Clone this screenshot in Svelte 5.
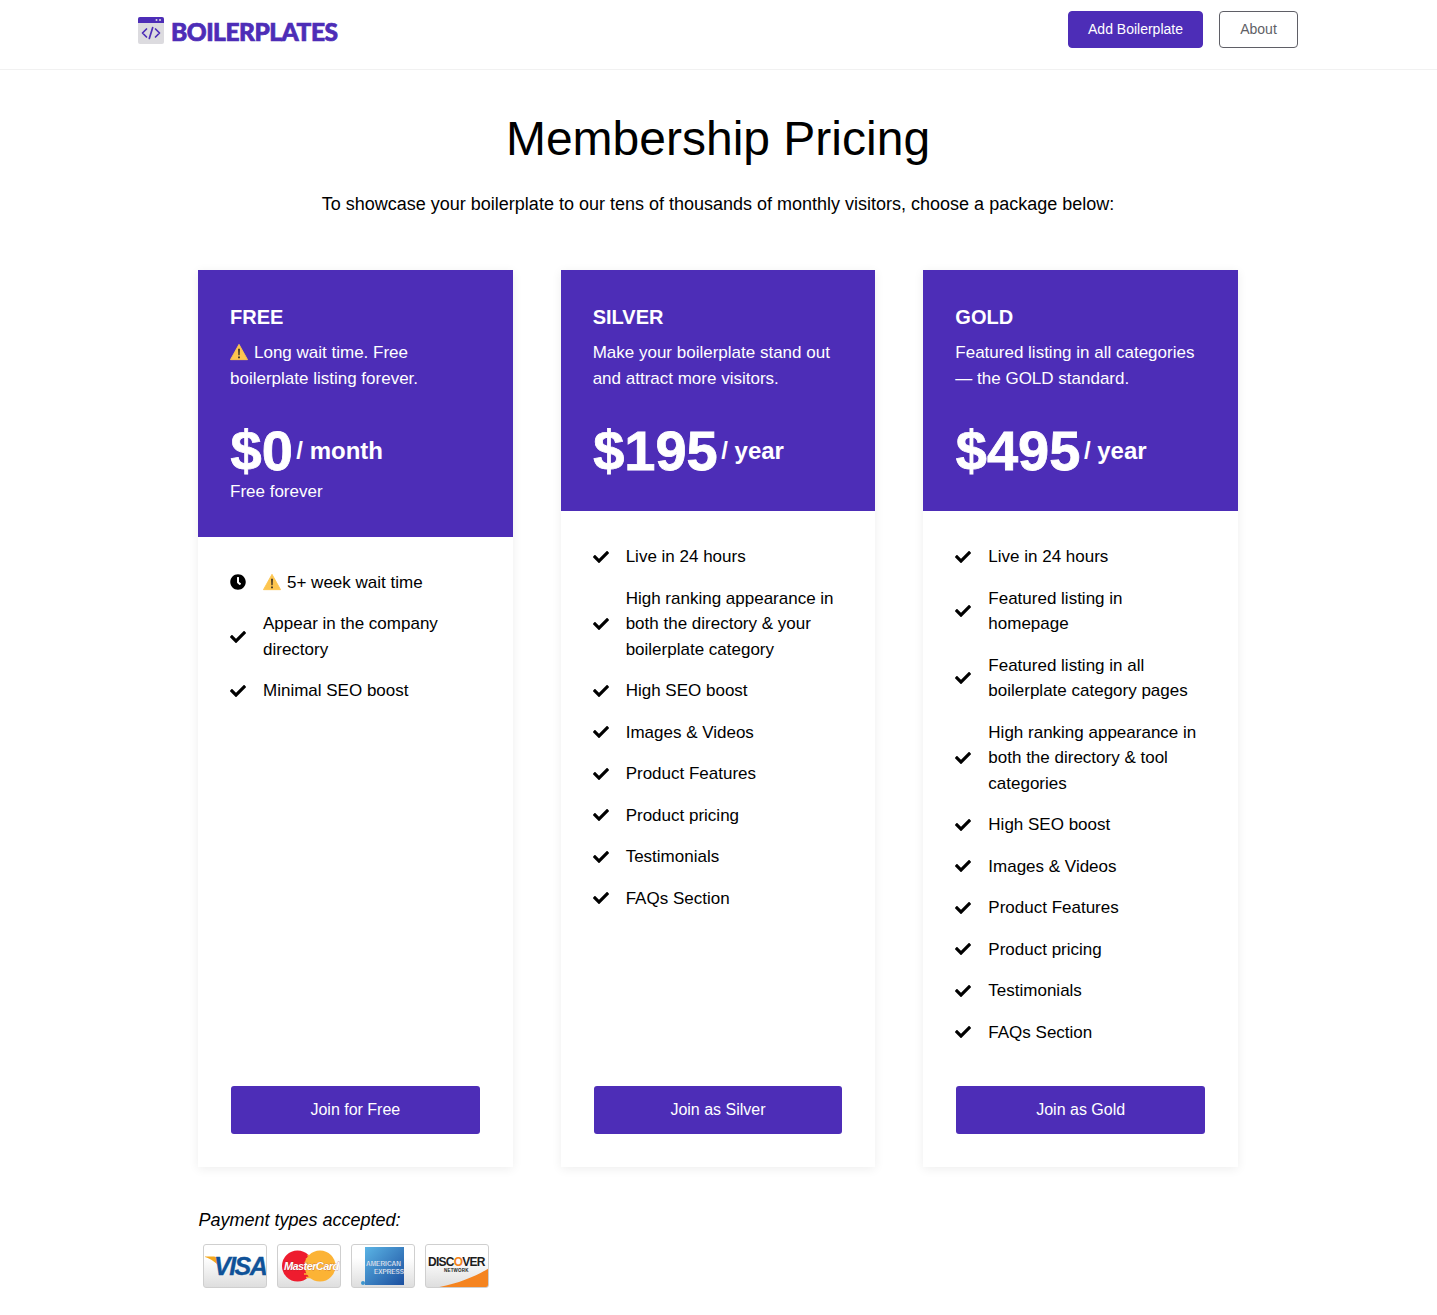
<script>
  const purple = '#4d2db7';
  const plans = [
    {
      name: 'FREE', warn: true, desc: 'Long wait time. Free boilerplate listing forever.', price: '$0', per: '/ month', note: 'Free forever', cta: 'Join for Free',
      items: [
        { text: '5+ week wait time', clock: true },
        { text: 'Appear in the company directory' },
        { text: 'Minimal SEO boost' }
      ]
    },
    {
      name: 'SILVER', desc: 'Make your boilerplate stand out and attract more visitors.', price: '$195', per: '/ year', cta: 'Join as Silver',
      items: ['Live in 24 hours', 'High ranking appearance in both the directory & your boilerplate category', 'High SEO boost', 'Images & Videos', 'Product Features', 'Product pricing', 'Testimonials', 'FAQs Section'].map((text) => ({ text }))
    },
    {
      name: 'GOLD', desc: 'Featured listing in all categories — the GOLD standard.', price: '$495', per: '/ year', cta: 'Join as Gold',
      items: ['Live in 24 hours', 'Featured listing in homepage', 'Featured listing in all boilerplate category pages', 'High ranking appearance in both the directory & tool categories', 'High SEO boost', 'Images & Videos', 'Product Features', 'Product pricing', 'Testimonials', 'FAQs Section'].map((text) => ({ text }))
    }
  ];
</script>

{#snippet warning(size)}
  <svg class="warn" width={size} height={size} viewBox="0 0 20 20" aria-hidden="true">
    <path d="M10 1.500 19.500 18.500H.5Z" fill="#fdc54f" stroke="#fdc54f" stroke-width="1" stroke-linejoin="round" />
    <path d="M9 6.500h2l-.3 7h-1.400ZM9 15h2v2H9Z" fill="#3a3024" />
  </svg>
{/snippet}

<header class="topbar">
  <div class="topbar-inner">
    <a class="logo" href="#top">
      <svg width="26" height="27" viewBox="0 0 26 27" aria-hidden="true">
        <rect y="0" width="26" height="27" rx="2" fill="#dcdbdf" />
        <path d="M0 6V2a2 2 0 0 1 2-2h22a2 2 0 0 1 2 2v4Z" fill={purple} />
        <circle cx="18.500" cy="3" r="1" fill="#dcdbdf" /><circle cx="22" cy="3" r="1" fill="#dcdbdf" />
        <path d="M8.500 12 4.500 16l4 4M17.500 12l4 4-4 4M14.700 10.500l-3.400 11" fill="none" stroke={purple} stroke-width="1.700" stroke-linecap="round" stroke-linejoin="round" />
      </svg>
      <span class="wordmark">BOILERPLATES</span>
    </a>
    <nav class="nav">
      <a class="btn-add" href="#top">Add Boilerplate</a>
      <a class="btn-about" href="#top">About</a>
    </nav>
  </div>
</header>

<main class="page">
  <h1>Membership Pricing</h1>
  <p class="lead">To showcase your boilerplate to our tens of thousands of monthly visitors, choose a package below:</p>

  <section class="plans">
    {#each plans as plan}
      <article class="plan">
        <div class="plan-head">
          <h2>{plan.name}</h2>
          <p class="desc">{#if plan.warn}{@render warning(18)}{/if}{plan.desc}</p>
          <div class="price"><strong>{plan.price}</strong><span>{plan.per}</span></div>
          {#if plan.note}<p class="note">{plan.note}</p>{/if}
        </div>
        <ul class="features">
          {#each plan.items as item}
            <li>
              {#if item.clock}
                <svg class="ico" width="16" height="16" viewBox="0 0 512 512" aria-hidden="true">
                  <path d="M256,8C119,8,8,119,8,256S119,504,256,504,504,393,504,256,393,8,256,8Zm92.490,313h0l-20,25a16,16,0,0,1-22.490,2.500h0l-67-49.720a40,40,0,0,1-15-31.230V112a16,16,0,0,1,16-16h32a16,16,0,0,1,16,16V256l58,42.500A16,16,0,0,1,348.490,321Z" fill="#000" />
                </svg>
              {:else}
                <svg class="ico" width="16" height="16" viewBox="0 0 512 512" aria-hidden="true">
                  <path d="M173.898 439.404l-166.400-166.400c-9.997-9.997-9.997-26.206 0-36.204l36.203-36.204c9.997-9.998 26.207-9.998 36.204 0L192 312.690 432.095 72.596c9.997-9.997 26.207-9.997 36.204 0l36.203 36.204c9.997 9.997 9.997 26.206 0 36.204l-294.400 294.401c-9.998 9.997-26.207 9.997-36.204-.001z" fill="#000" />
                </svg>
              {/if}
              <span class="feat-text">{#if item.clock}{@render warning(18)}{/if}{item.text}</span>
            </li>
          {/each}
        </ul>
        <div class="plan-foot"><a class="join" href="#top">{plan.cta}</a></div>
      </article>
    {/each}
  </section>

  <section class="payments">
    <p class="pay-label">Payment types accepted:</p>
    <div class="cards">
      <div class="paycard">
        <svg width="64" height="44" viewBox="0 0 64 44" aria-hidden="true">
          <path d="M2 12.500h9c1.500 0 2.500.8 3 2.500l2 8C13 18 8 15 2 13Z" fill="#f4a81d" />
          <text x="11" y="31" class="visa">VISA</text>
        </svg>
      </div>
      <div class="paycard">
        <svg width="64" height="44" viewBox="0 0 64 44" aria-hidden="true">
          <circle cx="20.500" cy="22" r="15.500" fill="#ee1c2e" />
          <circle cx="43" cy="22" r="15.500" fill="#fcb335" />
          <path d="M31.800 11.500h-1.400M28.800 15h5.600M27.500 18.500h8M27 30h7.500M29 33.500h5" stroke="#fcb335" stroke-width="1.400" fill="none" />
          <text x="7" y="26" class="mc">MasterCard</text>
        </svg>
      </div>
      <div class="paycard">
        <svg width="64" height="44" viewBox="0 0 64 44" aria-hidden="true">
          <defs><linearGradient id="ax" x1="0" y1="0" x2="1" y2="1"><stop offset="0" stop-color="#5bb4e5" /><stop offset="1" stop-color="#1c4f9f" /></linearGradient></defs>
          <rect x="14" y="3" width="39" height="38" fill="url(#ax)" />
          <circle cx="12" cy="39" r="2" fill="#3d95ce" />
          <text x="15" y="22" textLength="35" lengthAdjust="spacingAndGlyphs" class="ax">AMERICAN</text>
          <text x="23" y="29.500" textLength="30" lengthAdjust="spacingAndGlyphs" class="ax">EXPRESS</text>
        </svg>
      </div>
      <div class="paycard">
        <svg width="64" height="44" viewBox="0 0 64 44" aria-hidden="true">
          <path d="M9 44C32 40 50 33 64 24v20Z" fill="#f58420" />
          <text x="3" y="21.500" class="disc">DISC<tspan fill="#f58420">O</tspan>VER</text>
          <text x="19" y="28" class="net">NETWORK</text>
        </svg>
      </div>
    </div>
  </section>
</main>

<style>
  :global(body) {
    margin: 0;
    background: #fff;
    color: #000;
    font-family: "Liberation Sans", Arial, sans-serif;
  }

  a { text-decoration: none; }

  .topbar {
    height: 69px;
    border-bottom: 1px solid #f1f1f1;
  }
  .topbar-inner {
    width: 1160px;
    height: 100%;
    margin-left: 138px;
    display: flex;
    align-items: flex-start;
    justify-content: space-between;
  }
  .logo {
    display: flex;
    align-items: center;
    gap: 7px;
    margin-top: 17px;
    height: 27px;
    color: #4d2db7;
  }
  .wordmark {
    font-family: Lato, "Open Sans", sans-serif;
    font-weight: 900;
    font-size: 24.500px;
    letter-spacing: -0.48px;
    line-height: 27px;
    -webkit-text-stroke: 0.7px #4d2db7;
    margin-top: 2px;
  }
  .nav {
    display: flex;
    gap: 16px;
    margin-top: 11px;
  }
  .btn-add, .btn-about {
    box-sizing: border-box;
    height: 37px;
    line-height: 35px;
    border-radius: 4px;
    font-size: 14px;
    text-align: center;
  }
  .btn-add {
    width: 135px;
    background: #4d2db7;
    border: 1px solid #4d2db7;
    color: #fff;
  }
  .btn-about {
    width: 79px;
    border: 1px solid #5f5f66;
    color: #5f5f66;
  }

  .page {
    width: 1040px;
    margin-left: 198px;
  }
  h1 {
    margin: 0;
    padding-top: 40px;
    font-weight: 400;
    font-size: 48px;
    line-height: 58px;
    text-align: center;
  }
  .lead {
    margin: 23px 0 0;
    font-size: 18px;
    line-height: 27px;
    text-align: center;
  }

  .plans {
    display: grid;
    grid-template-columns: repeat(3, 1fr);
    gap: 48px;
    margin-top: 52px;
    height: 897px;
  }
  .plan {
    display: flex;
    flex-direction: column;
    background: #fff;
    box-shadow: 0 2px 10px rgba(0, 0, 0, 0.07);
  }
  .plan-head {
    box-sizing: border-box;
    background: #4d2db7;
    color: #fff;
    padding: 32px;
  }
  h2 {
    margin: 0;
    font-size: 20px;
    line-height: 30px;
    font-weight: 700;
  }
  .desc {
    margin: 8px 0 0;
    font-size: 17px;
    line-height: 25.500px;
  }
  .warn {
    vertical-align: -3px;
    margin-right: 6px;
  }
  .price {
    display: flex;
    align-items: center;
    gap: 4px;
    margin-top: 32px;
    height: 56px;
    line-height: 56px;
  }
  .price strong {
    font-size: 56px;
    font-weight: 700;
    margin-left: 0.5px;
    -webkit-text-stroke: 0.8px #fff;
  }
  .price span {
    font-size: 24px;
    font-weight: 700;
    margin-left: -0.5px;
  }
  .note {
    margin: 0;
    font-size: 17px;
    line-height: 25.500px;
  }

  .features {
    list-style: none;
    margin: 0;
    padding: 33px 32px 0;
    display: flex;
    flex-direction: column;
    gap: 16px;
    flex: 1;
  }
  .features li {
    display: flex;
    align-items: center;
    gap: 17px;
    font-size: 17px;
    line-height: 25.500px;
  }
  .ico { flex: none; }
  .feat-text { flex: 1; }

  .plan-foot {
    padding: 0 33px 33px;
  }
  .join {
    display: block;
    height: 48px;
    line-height: 48px;
    border-radius: 3px;
    background: #4d2db7;
    color: #fff;
    font-size: 16px;
    text-align: center;
  }

  .payments {
    margin-top: 41px;
    padding-bottom: 27px;
  }
  .pay-label {
    margin: 0;
    padding-left: 0.5px;
    font-size: 18px;
    line-height: 24px;
    font-style: italic;
  }
  .cards {
    display: flex;
    gap: 10px;
    margin-top: 12px;
    padding-left: 5px;
  }
  .paycard {
    box-sizing: border-box;
    width: 64px;
    height: 44px;
    border: 1px solid #cfcfcf;
    border-radius: 3px;
    background: linear-gradient(#fff 30%, #dedede);
    overflow: hidden;
  }
  .paycard svg {
    display: block;
    margin: -1px;
  }
  .visa {
    font: italic 700 25px "Liberation Sans", sans-serif;
    letter-spacing: -1.500px;
    fill: #0f5298;
    stroke: #0f5298;
    stroke-width: 0.3px;
  }
  .mc {
    font: italic 700 11px "Liberation Sans", sans-serif;
    letter-spacing: -0.6px;
    fill: #fff;
    stroke: #8c2a2a;
    stroke-width: 0.3px;
    paint-order: stroke;
  }
  .ax {
    font: 700 8px "Liberation Sans", sans-serif;
    fill: #eaf4fb;
    stroke: #1c4f9f;
    stroke-width: 0.15px;
  }
  .disc {
    font: 700 12px "Liberation Sans", sans-serif;
    letter-spacing: -0.75px;
    fill: #1c1c1c;
  }
  .net {
    font: 700 4.500px "Liberation Sans", sans-serif;
    letter-spacing: 0.2px;
    fill: #222;
  }
</style>
